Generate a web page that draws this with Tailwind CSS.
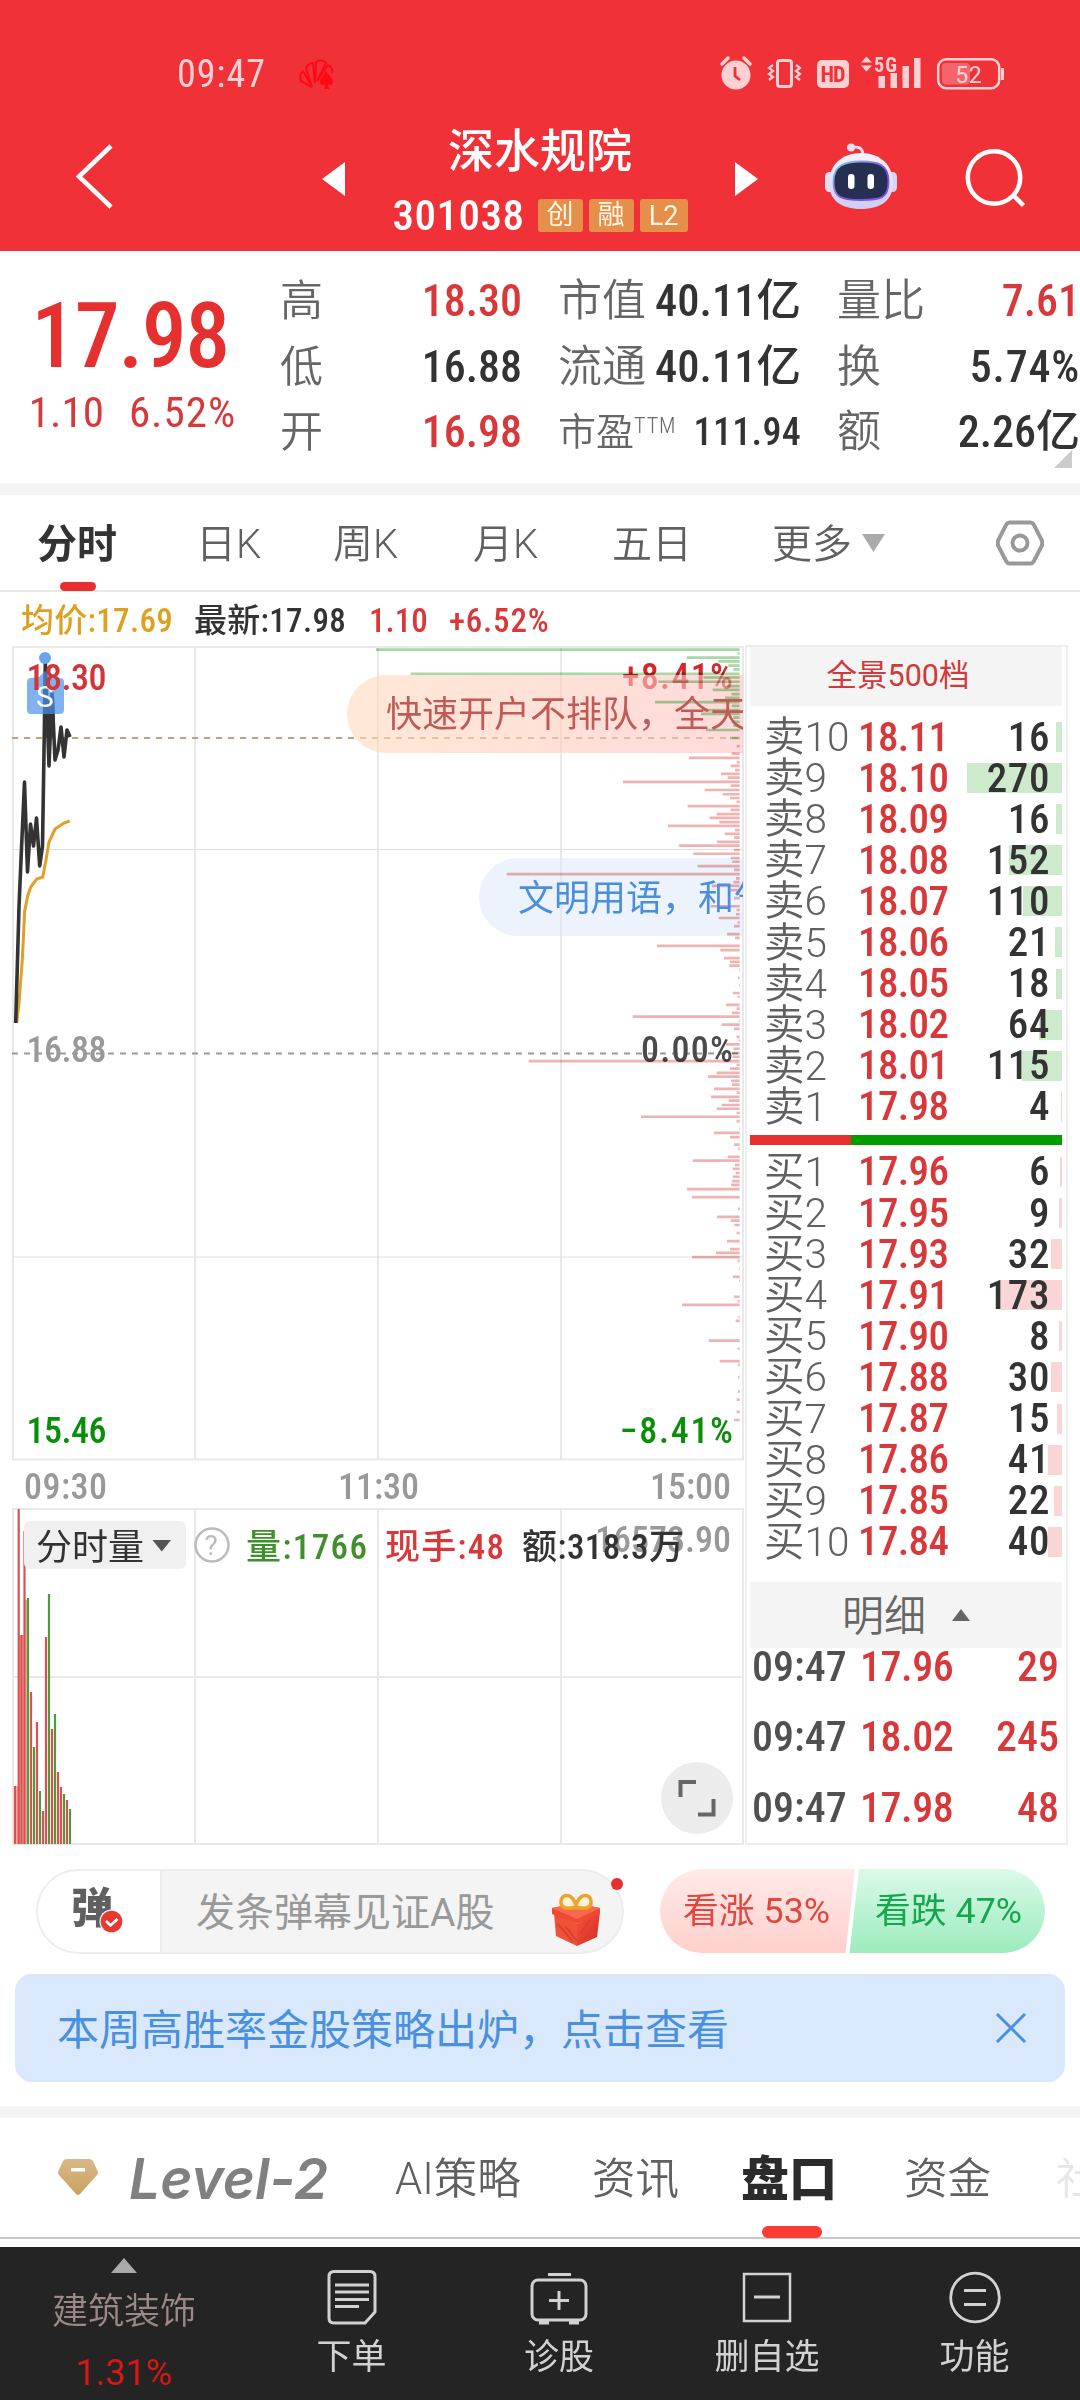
<!DOCTYPE html>
<html lang="zh-CN">
<head>
    <meta charset="UTF-8" />
    <meta name="viewport" content="width=device-width, initial-scale=1.0"/>
    <title>深水规院 301038</title>
    <script src="https://cdn.jsdelivr.net/npm/@tailwindcss/browser@4"></script>
    <style>
        body {
            font-family: 'Roboto', 'Noto Sans CJK SC', sans-serif;
        }
        .num {
            font-family: 'Roboto Condensed', 'Noto Sans CJK SC', sans-serif;
            font-weight: 500;
        }
    </style>
</head>
<body class="w-[1080px] h-[2400px] overflow-hidden bg-white text-[#333] flex flex-col">

    <!-- Header -->
    <header class="h-[251px] shrink-0 bg-[#f13138] text-white">
        <div class="h-[104px] pt-[43px] pl-[177px] pr-[74px] flex items-center text-[#ffd0d2]">
            <span class="num !font-normal text-[38px] tracking-[1px] leading-[60px]">09:47</span>
            <svg class="ml-[32px] shrink-0" width="38" height="30" viewBox="0 0 38 30" fill="none" stroke="#ff0a14" stroke-width="2">
                <path d="M14 28L3 22C1 17 3 13 5 12L14 28L8 9C10 5 13 4 15 4L17 24L18 3C22 0 27 2 28 4L19 22L30 6C34 8 35 12 34 14"/>
                <path d="M28 12c-3 5-7 8-6 12 2 3 4 2 5 1l-1 5h5l-1-5c2 1 4 1 5-1 1-4-4-7-7-12z" fill="#ff0a14" stroke="none"/>
            </svg>
            <svg class="ml-auto shrink-0" width="288" height="40" viewBox="718 53 288 40" fill="#ffd0d2">
                <!-- alarm -->
                <circle cx="736" cy="74" r="14.5"/>
                <path d="M722 63l6-6M750 63l-6-6" stroke="#ffd0d2" stroke-width="3.5" stroke-linecap="round"/>
                <path d="M735 66v9l5 4" stroke="#f13138" stroke-width="2.8" fill="none"/>
                <!-- vibrate -->
                <rect x="777.5" y="59.500" width="14" height="26" rx="2.500" fill="none" stroke="#ffd0d2" stroke-width="3"/>
                <path d="M773 64l-4 3 4 3-4 3 4 3-4 3M796 64l4 3-4 3 4 3-4 3 4 3" fill="none" stroke="#ffd0d2" stroke-width="2.200"/>
                <!-- HD -->
                <rect x="817" y="59" width="32" height="28" rx="5"/>
                <text x="820.500" y="81" font-family="Roboto Condensed" font-weight="700" font-size="22" fill="#f13138" textLength="25">HD</text>
                <!-- signal -->
                <path d="M861 61.500l5.500-6 5.500 6zM861 64.500l5.500 6 5.500-6z"/>
                <text x="874" y="70.500" font-family="Roboto Condensed" font-weight="700" font-size="20" textLength="23">5G</text>
                <path d="M878.500 75h6.500v12h-6.500zM890.500 72h6.500v15h-6.500zM902.500 65h6.500v22h-6.500zM914 57h6.500v30h-6.500z"/>
                <!-- battery -->
                <rect x="938.200" y="58.200" width="61" height="29" rx="8" fill="none" stroke="#ffd0d2" stroke-width="2.500"/>
                <rect x="942" y="62" width="28" height="21.500" rx="4" fill="#ffffff" fill-opacity=".25"/>
                <path d="M1001 67h3v12h-3z"/>
                <text x="955" y="82" font-family="Roboto Condensed" font-size="24" textLength="27" lengthAdjust="spacingAndGlyphs">52</text>
            </svg>
        </div>
        <div class="h-[147px] pl-[74px] pr-[53px] flex items-start">
            <svg class="mt-[39px] shrink-0" width="42" height="68" viewBox="0 0 42 68" fill="none" stroke="#fff" stroke-width="4.500"><path d="M37 3L5 33.500L37 64"/></svg>
            <svg class="ml-[206px] mt-[58px] shrink-0" width="23" height="34" viewBox="0 0 23 34"><path d="M23 0v34L0 17z" fill="#fff"/></svg>
            <div class="w-[390px] flex flex-col items-center">
                <h1 class="text-[46px] leading-[60px] font-medium mt-[17px]">深水规院</h1>
                <div class="flex items-center gap-[6px] mt-[8px] h-[52px]">
                    <span class="num text-[43px] leading-[52px] tracking-[.5px] mr-[7px]">301038</span>
                    <span class="w-[45px] h-[33px] rounded-[3px] bg-[#e58f4b] text-[27px] leading-[32px] text-center text-[#fff6e4]">创</span>
                    <span class="w-[45px] h-[33px] rounded-[3px] bg-[#e58f4b] text-[27px] leading-[32px] text-center text-[#fff6e4]">融</span>
                    <span class="w-[48px] h-[33px] rounded-[3px] bg-[#e58f4b] text-[27px] leading-[34px] text-center text-[#fff6e4]">L2</span>
                </div>
            </div>
            <svg class="mt-[58px] shrink-0" width="23" height="34" viewBox="0 0 23 34"><path d="M0 0v34L23 17z" fill="#fff"/></svg>
            <svg class="ml-[66px] mt-[39px] shrink-0" width="74" height="68" viewBox="0 0 74 68">
                <defs>
                    <linearGradient id="shell" x1="0" y1="0" x2="0" y2="1"><stop offset="0" stop-color="#fbf4fb"/><stop offset="1" stop-color="#cfcbf5"/></linearGradient>
                    <linearGradient id="rim" x1="0" y1="0" x2="1" y2="1"><stop offset="0" stop-color="#8fd0ee"/><stop offset=".6" stop-color="#7a4fe0"/><stop offset="1" stop-color="#7d5cf0"/></linearGradient>
                </defs>
                <path d="M28 4.500c7-1 11 0 11 9" fill="none" stroke="#f3dff0" stroke-width="2.800"/>
                <circle cx="27" cy="4.500" r="4" fill="#f3d9ee"/>
                <rect x="1" y="29" width="9" height="20" rx="4.500" fill="#e2def5"/>
                <rect x="64" y="29" width="9" height="20" rx="4.500" fill="#d9d4f3"/>
                <path d="M37 10C56 10 69 22 69 40 69 57 57 66 37 66S5 57 5 40C5 22 18 10 37 10z" fill="url(#shell)"/>
                <path d="M37 18.500c17 0 27.500 3 27.500 20S57 57 37 57 9.500 54.500 9.500 38.500 20 18.500 37 18.500z" fill="#252f52" stroke="url(#rim)" stroke-width="1.800"/>
                <rect x="24" y="31" width="6.500" height="15" rx="3.250" fill="#fff"/>
                <rect x="43.500" y="31" width="6.500" height="15" rx="3.250" fill="#fff"/>
            </svg>
            <svg class="ml-auto mt-[43px] shrink-0" width="64" height="64" viewBox="0 0 64 64" fill="none" stroke="#fff" stroke-width="4.500"><circle cx="31" cy="30.500" r="26.200"/><path d="M50 48l10.500 10.500"/></svg>
        </div>
    </header>

    <!-- Quote summary -->
    <section class="h-[232px] shrink-0 flex relative">
        <div class="w-[260px] text-center text-[#e5302f]">
            <div class="num text-[90px] leading-[100px] mt-[36px] tracking-[-1.5px]">17.98</div>
            <div class="num !font-[450] text-[43px] leading-[50px] flex justify-center gap-[25px] text-[#d8383a] pl-[5px]"><span>1.10</span><span class="tracking-[1px]">6.52%</span></div>
        </div>
        <div class="num ml-[20px] w-[242px] mt-[18px] text-[45px] leading-[65.5px]">
            <div class="flex justify-between"><span class="text-[43px] font-[350] text-[#666]">高</span><span class="text-[44px] text-[#d8383a]">18.30</span></div>
            <div class="flex justify-between"><span class="text-[43px] font-[350] text-[#666]">低</span><span class="text-[44px]">16.88</span></div>
            <div class="flex justify-between"><span class="text-[43px] font-[350] text-[#666]">开</span><span class="text-[44px] text-[#d8383a]">16.98</span></div>
        </div>
        <div class="num ml-[36px] w-[243px] mt-[18px] text-[45px] leading-[65.5px]">
            <div class="flex justify-between"><span class="text-[44px] font-[350] text-[#666]">市值</span><span class="text-[44.5px]">40.11亿</span></div>
            <div class="flex justify-between"><span class="text-[44px] font-[350] text-[#666]">流通</span><span class="text-[44.5px]">40.11亿</span></div>
            <div class="flex justify-between"><span class="text-[38px] font-[350] text-[#666]">市盈<sup class="text-[22px] top-[-12px] tracking-[1px]">TTM</sup></span><span class="text-[38px] tracking-[.3px]">111.94</span></div>
        </div>
        <div class="num ml-[36px] w-[243px] mt-[18px] text-[45px] leading-[65.5px]">
            <div class="flex justify-between"><span class="text-[44px] font-[350] text-[#666]">量比</span><span class="text-[#d8383a] text-[44px]">7.61</span></div>
            <div class="flex justify-between"><span class="text-[44px] font-[350] text-[#666]">换</span><span class="text-[44px] tracking-[.8px]">5.74%</span></div>
            <div class="flex justify-between"><span class="text-[44px] font-[350] text-[#666]">额</span><span class="text-[44px]">2.26亿</span></div>
        </div>
        <svg class="absolute right-[8px] bottom-[15px]" width="18" height="18" viewBox="0 0 18 18"><path d="M18 0v18H0z" fill="#ccc"/></svg>
    </section>
    <div class="h-[12px] shrink-0 bg-[#f4f4f4]"></div>

    <!-- Period tabs -->
    <nav class="h-[97px] shrink-0 border-b-2 border-[#e8e8e8] flex items-center text-[40px] leading-[60px] font-[350] text-[#606060] pl-[37px] pr-[36px] relative">
        <span class="w-[159px] font-bold text-[#333] pt-[4px]">分时</span>
        <span class="w-[137px] pt-[4px]">日K</span>
        <span class="w-[140px] pt-[4px]">周K</span>
        <span class="w-[139px] pt-[4px]">月K</span>
        <span class="w-[160px] pt-[4px]">五日</span>
        <span class="flex items-center gap-[10px] pt-[4px]">更多<svg class="mb-[4px]" width="23" height="18" viewBox="0 0 23 18"><path d="M0 0h23L11.500 18z" fill="#aaa"/></svg></span>
        <svg class="ml-auto" width="48" height="46" viewBox="0 0 48 46" fill="none" stroke="#999" stroke-width="4"><path d="M13.500 2.500h21q2 0 3 1.700l8 15.500q1.500 3.300 0 6.600l-8 15.500q-1 1.700-3 1.700h-21q-2 0-3-1.700l-8-15.500q-1.500-3.300 0-6.600l8-15.500q1-1.700 3-1.700z"/><circle cx="24" cy="23" r="7.500"/></svg>
        <i class="absolute left-[60px] bottom-[-1px] w-[36px] h-[9px] rounded-full bg-[#e5302f]"></i>
    </nav>

    <div class="h-[53px] shrink-0 pl-[21px] pt-[5px] flex items-center num text-[33px] leading-[48px]">
        <span class="text-[#dfa01f] w-[173px] tracking-[.3px]">均价:17.69</span>
        <span class="w-[175px] tracking-[.3px]">最新:17.98</span>
        <span class="text-[#d8383a] w-[80px]">1.10</span>
        <span class="text-[#d8383a] tracking-[.8px]">+6.52%</span>
    </div>

    <main class="h-[1200px] shrink-0 flex">
        <!-- Minute chart and volume -->
        <svg class="shrink-0 num" width="745" height="1200" viewBox="0 645 745 1200" font-size="36">
            <defs>
                <linearGradient id="pill" x1="0" y1="0" x2="1" y2="0"><stop offset="0" stop-color="#ffd9ba"/><stop offset="1" stop-color="#ffb0c6"/></linearGradient>
                <clipPath id="plot"><path d="M0 645h743v1200H0z"/></clipPath>
            </defs>
            <g fill="none" stroke="#e9e9e9" stroke-width="2">
                <path d="M13 647H743V1459.500H13zM195 647V1459M378 647V1459M561 647V1459"/>
                <path d="M13 1509H743V1844H13zM195 1509V1844M378 1509V1844M561 1509V1844M13 1677H743"/>
                <path d="M13 849.500H743M13 1257H743" stroke="#e0e0e0" stroke-width="1.200"/>
            </g>
            <path d="M12 738H739" stroke="#b9a680" stroke-width="2" stroke-dasharray="6 6"/>
            <path d="M12 1053.500H739" stroke="#999" stroke-width="2" stroke-dasharray="6 6"/>

            <path d="M16.700 1023L19 1003L22.300 960L24.700 911L27.700 896L30.700 887L36.700 879L42.700 877L46 860L49 842L55 829L64 823L69.700 821" fill="none" stroke="#dfa127" stroke-width="3"/>
            <path d="M15.700 1023L19 907L21.300 853L24.500 782L27.500 872L30.500 824L33.500 846L36.500 818L39.700 866L42.500 846L44.500 720L45.300 662L49 766L52 693L55 760L58 750L61 727L64 757L67 730L70 737" fill="none" stroke="#333" stroke-width="3.600" stroke-linejoin="round"/>
            <path d="M43.500 700h11v37h-11z" fill="#333"/>

            <!-- sell mark -->
            <circle cx="45" cy="658" r="6" fill="#6aa5ec"/>
            <path d="M31 678l8-1 6-6 6 6 9 1q4 0 4 4v28q0 4-4 4H31q-4 0-4-4v-28q0-4 4-4z" fill="#4a91ea" fill-opacity=".7"/>
            <text x="36" y="707" font-family="Roboto" font-weight="400" font-size="30" fill="#fff">S</text>

            <g>
                <text x="26.500" y="689.500" fill="#d03638" textLength="80">18.30</text>
                <text x="26.500" y="1062" fill="#999" textLength="80">16.88</text>
                <text x="26.500" y="1443" fill="#0a8f0a" textLength="80">15.46</text>
                <text x="622" y="689" fill="#d8262a" textLength="111">+8.41%</text>
                <text x="641" y="1062" fill="#4a4a4a" textLength="92">0.00%</text>
                <text x="620" y="1443" fill="#0a8f0a" textLength="113">−8.41%</text>
                <g fill="#999">
                    <text x="24" y="1498.500" textLength="83">09:30</text>
                    <text x="338" y="1498.500" textLength="81">11:30</text>
                    <text x="650" y="1498.500" textLength="81">15:00</text>
                    <text x="595" y="1552" textLength="136">16573.90</text>
                </g>
            </g>

            <g clip-path="url(#plot)">
                <rect x="347" y="675" width="700" height="78" rx="39" fill="url(#pill)" fill-opacity=".6"/>
                <rect x="479" y="858" width="500" height="78" rx="39" fill="#dce9fb" fill-opacity=".55"/>
            </g>
            <g class="mix-blend-multiply" transform="translate(340 640) scale(.33333 .5357)" fill="none" stroke-width="5">
                <path id="sellDepth" stroke="#a6d9a6"/>
                <path id="buyDepth" stroke="#f0b2b2"/>
            </g>
            <g clip-path="url(#plot)" font-family="Noto Sans CJK SC" font-weight="400">
                <text x="386" y="727" fill="#bf5a57">快速开户不排队，全天</text>
                <text x="518" y="911" fill="#4a8edc">文明用语，和气</text>
            </g>

            <!-- volume -->
            <g fill="none" stroke-width="2.200">
                <path stroke="#f7aaaa" stroke-width="3" d="M16.500 1844V1786M20.500 1844V1635M23.500 1844V1635M26.500 1844V1600"/>
                <path id="volUp" stroke="#d95252"/>
                <path id="volDown" stroke="#4f9a3c"/>
            </g>
            <rect x="24" y="1521" width="162" height="48" rx="6" fill="#f0f0f0"/>
            <g font-weight="400">
                <text x="36" y="1559.500" textLength="108" fill="#333">分时量</text>
                <path d="M152.500 1540h18.500l-9.250 11.500z" fill="#555"/>
                <circle cx="212" cy="1545" r="16.500" fill="none" stroke="#bbb" stroke-width="2.500"/>
                <text x="204.500" y="1555" font-family="Roboto" font-size="28" fill="#bbb">?</text>
            </g>
            <g font-size="35">
                <text x="246" y="1558.500" fill="#3f8f2a" textLength="121">量:1766</text>
                <text x="385" y="1558.500" fill="#d8383a" textLength="119">现手:48</text>
                <text x="522" y="1558.500" fill="#333" textLength="162">额:318.3万</text>
            </g>
            <circle cx="697" cy="1798" r="36" fill="#ececec"/>
            <path d="M680.500 1797V1782H696M698 1814.500H713.500V1799" fill="none" stroke="#666" stroke-width="4"/>
        </svg>

        <!-- Order book -->
        <aside class="w-[323px] shrink-0 border-2 border-[#eee] pl-[3px] pr-[4px] flex flex-col">
            <div class="h-[59px] shrink-0 bg-[#f4f4f4] text-center pr-[16px] text-[30.5px] leading-[58px] text-[#d03a3a]">全景500档</div>
            <div id="asks" class="mt-[10px]"></div>
            <div class="h-[10px] shrink-0 mt-[8px] flex"><i class="w-[101px] bg-[#e6312f]"></i><i class="grow bg-[#009c00]"></i></div>
            <div id="bids" class="mt-[6px]"></div>
            <div class="h-[66px] shrink-0 mt-[20px] pt-[4px] bg-[#f4f4f4] flex items-center justify-center gap-[26px] text-[42px] leading-[60px] text-[#666] font-[350]">明细<svg class="mb-[4px]" width="18" height="12" viewBox="0 0 18 12"><path d="M0 12h18L9 0z" fill="#666"/></svg></div>
            <div id="ticks" class="mt-[-17px]"></div>
        </aside>
    </main>

    <!-- Comment bar and vote -->
    <section class="h-[129px] shrink-0 pl-[36px] pt-[24px] flex">
        <div class="w-[588px] h-[85px] rounded-full border-2 border-[#ededed] bg-[#f4f4f4] flex items-center relative">
            <div class="w-[124px] h-full rounded-l-full bg-white border-r-2 border-[#ededed] relative">
                <span class="absolute left-[33px] top-[8px] text-[42px] leading-[60px] font-black text-[#606060]">弹</span>
                <svg class="absolute left-[61px] top-[38px]" width="25" height="25" viewBox="0 0 25 25"><circle cx="12.500" cy="12.500" r="12" fill="#fff"/><circle cx="12.500" cy="12.500" r="10.800" fill="#e8382f"/><path d="M7 12l4.500 4.500 7-6.500" fill="none" stroke="#fff" stroke-width="2.600"/></svg>
            </div>
            <span class="ml-[34px] pt-[3px] text-[39px] text-[#999]">发条弹幕见证A股</span>
            <svg class="absolute left-[512px] top-[22px]" width="52" height="54" viewBox="0 0 52 54">
                <defs><linearGradient id="box" x1="0" y1="0" x2="1" y2="1"><stop offset="0" stop-color="#f8553a"/><stop offset="1" stop-color="#d8262c"/></linearGradient></defs>
                <path d="M4 20l23 11v22L6 43z" fill="#ef5238"/>
                <path d="M27 31l23-12-3 25-20 9z" fill="url(#box)"/>
                <path d="M8 31l15 18M15 33l12 15M33 49l13-21M30 41l10-14" stroke="#d9402f" stroke-width="2"/>
                <path d="M2 15l24-5 24 5v6L27 31 2 21z" fill="#ee4a33"/>
                <path d="M2 15l24-5 24 5-23 11z" fill="#f8694b"/>
                <path d="M26 14C16 17 10 14 11 8 12 0 22 0 26 12 30 0 40 0 41 8c1 6-5 9-15 6z" fill="#fff2dd" stroke="#eda528" stroke-width="3.500"/>
            </svg>
            <i class="absolute right-[-1px] top-[7px] w-[12px] h-[12px] rounded-full bg-[#e5302f]"></i>
        </div>
        <svg class="ml-[36px]" width="386" height="84" viewBox="0 0 386 84" font-size="35">
            <defs>
                <linearGradient id="up" x1="0" y1="0" x2="0" y2="1"><stop offset="0" stop-color="#ffeae8"/><stop offset="1" stop-color="#ffd0cc"/></linearGradient>
                <linearGradient id="down" x1="0" y1="0" x2="0" y2="1"><stop offset="0" stop-color="#dbfae8"/><stop offset="1" stop-color="#9cebbe"/></linearGradient>
            </defs>
            <path d="M42 0H195L185.500 84H42A42 42 0 0 1 42 0z" fill="url(#up)"/>
            <path d="M199 0H343A42 42 0 0 1 343 84H189.500z" fill="url(#down)"/>
            <text x="23" y="54" fill="#e0483f" textLength="147" lengthAdjust="spacingAndGlyphs">看涨 53%</text>
            <text x="215" y="54" fill="#16a74e" textLength="147" lengthAdjust="spacingAndGlyphs">看跌 47%</text>
        </svg>
    </section>

    <!-- Notice -->
    <section class="h-[108px] shrink-0 mx-[15px] rounded-[17px] bg-[#dae8fb] pl-[42px] pr-[38px] flex items-center justify-between text-[42px] text-[#4a90e0]">
        <span class="pt-[4px]">本周高胜率金股策略出炉，点击查看</span>
        <svg width="32" height="32" viewBox="0 0 32 32" fill="none" stroke="#4a90e0" stroke-width="3"><path d="M2 2l28 28M30 2L2 30"/></svg>
    </section>
    <div class="h-[12px] shrink-0 mt-[24px] bg-[#f4f4f4]"></div>

    <!-- Content tabs -->
    <nav class="h-[121px] shrink-0 border-b-2 border-[#c8c8c8] flex items-center text-[43.5px] leading-[70px] font-[350] text-[#606060] pl-[58px] relative">
        <svg class="shrink-0" width="40" height="37" viewBox="0 0 40 37"><defs><linearGradient id="gem" x1="0" y1="0" x2="0" y2="1"><stop offset="0" stop-color="#d8b889"/><stop offset="1" stop-color="#cba15f"/></linearGradient></defs><path d="M9 0h22q3 0 4 2l5 11q0 2-1 3L22 35q-2 2-4 0L1 16q-1-1-1-3L5 2q1-2 4-2z" fill="url(#gem)"/><rect x="13" y="9" width="14" height="3.500" fill="#fff"/></svg>
        <svg class="ml-[28px] shrink-0" width="210" height="70" viewBox="0 0 210 70"><text x="3" y="56" font-family="Inter" font-weight="600" font-style="italic" font-size="57" fill="#808080" textLength="199" lengthAdjust="spacingAndGlyphs">Level-2</text></svg>
        <span class="w-[197px] shrink-0 ml-[59px] pt-[4px]">AI策略</span>
        <span class="w-[149px] shrink-0 pt-[4px]">资讯</span>
        <span class="w-[163px] shrink-0 pt-[4px] font-black text-[48px] text-[#2b2b2b]">盘口</span>
        <span class="w-[152px] shrink-0 pt-[4px]">资金</span>
        <span class="shrink-0 pt-[4px] text-[#e6e6e6]">社</span>
        <i class="absolute left-[762px] bottom-[-1px] w-[60px] h-[12px] rounded-full bg-[#fa3c32]"></i>
    </nav>
    <div class="h-[8px] shrink-0"></div>

    <!-- Bottom bar -->
    <footer class="h-[153px] shrink-0 bg-[#242424] text-[#d2d2d2] text-[35px] leading-[50px] flex">
        <div class="w-[248px] flex flex-col items-center">
            <svg class="mt-[11px]" width="26" height="15" viewBox="0 0 26 15"><path d="M0 15h26L13 0z" fill="#aaa"/></svg>
            <span class="text-[36px] mt-[14px] text-[#9c8886] font-[350]">建筑装饰</span>
            <span class="text-[36px] mt-[11px] text-[#d81812]">1.31%</span>
        </div>
        <div class="w-[207px] flex flex-col items-center">
            <svg class="mt-[22px]" width="52" height="56" viewBox="0 0 52 56" fill="none" stroke="#d2d2d2" stroke-width="3"><path d="M8 2.500h36q5 0 5 5V43L39 54H8q-5 0-5-5V7.500q0-5 5-5z"/><path d="M9 16h34M9 23h34M9 30.500h34M9 37.500h24"/></svg>
            <span class="mt-[8px]">下单</span>
        </div>
        <div class="w-[208px] flex flex-col items-center">
            <svg class="mt-[22px]" width="60" height="56" viewBox="0 0 60 56" fill="none" stroke="#d2d2d2" stroke-width="3"><path d="M19 5.500h23"/><rect x="3" y="11" width="54" height="40" rx="6"/><path d="M30 22v19M20 31.500h20"/><path d="M10 53.500h10M40 53.500h10" stroke-width="4"/></svg>
            <span class="mt-[8px]">诊股</span>
        </div>
        <div class="w-[208px] flex flex-col items-center">
            <svg class="mt-[22px]" width="52" height="56" viewBox="0 0 52 56" fill="none" stroke="#d2d2d2" stroke-width="2.500"><rect x="3" y="5" width="46" height="47"/><path d="M13 28h26" stroke-width="3"/></svg>
            <span class="mt-[8px]">删自选</span>
        </div>
        <div class="w-[207px] flex flex-col items-center">
            <svg class="mt-[22px]" width="52" height="56" viewBox="0 0 52 56" fill="none" stroke="#d2d2d2" stroke-width="2.800"><circle cx="26" cy="28.500" r="24.300"/><path d="M15 21.500h22M15 35.500h22" stroke-width="3"/></svg>
            <span class="mt-[8px]">功能</span>
        </div>
    </footer>

    <script>
        const asks = [['卖10', '18.11', 16], ['卖9', '18.10', 270], ['卖8', '18.09', 16], ['卖7', '18.08', 152], ['卖6', '18.07', 110],
            ['卖5', '18.06', 21], ['卖4', '18.05', 18], ['卖3', '18.02', 64], ['卖2', '18.01', 115], ['卖1', '17.98', 4]];
        const bids = [['买1', '17.96', 6], ['买2', '17.95', 9], ['买3', '17.93', 32], ['买4', '17.91', 173], ['买5', '17.90', 8],
            ['买6', '17.88', 30], ['买7', '17.87', 15], ['买8', '17.86', 41], ['买9', '17.85', 22], ['买10', '17.84', 40]];
        const ticks = [['09:47', '17.96', 29], ['09:47', '18.02', 245], ['09:47', '17.98', 48]];

        function bookRow(row, barClass) {
            return `<div class="h-[41.1px] relative flex items-center pl-[14px] text-[41px] leading-[41px]">
                <i class="absolute right-0 top-[6px] h-[30px] ${barClass}" style="width:${Math.max(1, row[2] * 0.352)}px"></i>
                <span class="w-[94px] text-[40.5px] font-[350] text-[#606060] whitespace-nowrap pt-[2px]">${row[0]}</span>
                <span class="num text-[#d8383a] tracking-[-.6px] pt-[1px]">${row[1]}</span>
                <span class="num ml-auto mr-[12px] tracking-[.6px] relative pt-[1px]">${row[2]}</span>
            </div>`;
        }

        document.getElementById('asks').innerHTML = asks.map(r => bookRow(r, 'bg-[#cdeacd]')).join('');
        document.getElementById('bids').innerHTML = bids.map(r => bookRow(r, 'bg-[#f9d5d5]')).join('');
        document.getElementById('ticks').innerHTML = ticks.map(r => `<div class="num h-[70.5px] flex items-center pl-[2px] pr-[3px] text-[42px] text-[#d8383a]">
            <span class="w-[108px] text-[#505050]">${r[0]}</span><span class="tracking-[-.5px]">${r[1]}</span><span class="ml-auto">${r[2]}</span></div>`).join('');

        // price distribution: [y, left edge], every bar ends at the right edge of the plot
        const sellDepth = [[18,108],[25,1193],[33,1040],[40,1135],[48,1165],[55,1180],[63,212],[70,1090],[78,955],[86,1160],[93,1118],[101,1175],[108,1155],[116,945],
            [123,1175],[131,1085],[138,1083],[145,1180],[153,1175],[160,1180],[168,1098],[183,1170]];
        const buyDepth = [[198,1190],[212,1175],[220,1047],[228,1190],[235,1172],[243,1185],[250,1143],[257,1163],[265,849],[272,1172],[280,1094],[288,1148],[295,1170],
            [302,1190],[310,1043],[317,1172],[325,1130],[332,1109],[340,1138],[347,984],[355,1185],[362,1154],[369,1182],[377,1131],[384,1017],[392,1182],[399,1060],
            [407,1172],[414,1177],[422,1073],[429,1182],[437,500],[445,1188],[452,1180],[459,1115],[467,1172],[474,1188],[482,1182],[497,1112],[504,1190],[512,1188],
            [519,1136],[527,1193],[534,1182],[549,1161],[556,1185],[571,951],[579,1141],[594,1152],[601,1170],[608,1168],[616,1197],[631,1194],[645,1197],[659,1179],
            [666,1193],[681,1158],[688,1190],[696,1176],[703,878],[711,1196],[718,1145],[726,1182],[741,1190],[748,1196],[755,1158],[763,1180],[771,1175],[778,1178],
            [786,566],[793,1190],[800,1170],[808,1130],[815,1104],[823,1173],[830,1176],[838,1122],[845,1190],[853,1113],[860,1166],[868,1145],[875,1130],[883,1190],
            [890,903],[898,1190],[912,1197],[920,1122],[928,1170],[942,1182],[950,1194],[965,1163],[972,1058],[980,1185],[987,1178],[995,1188],[1002,1178],[1010,1176],
            [1017,1173],[1025,1041],[1040,1056],[1062,1194],[1077,1131],[1084,1172],[1092,1183],[1107,1190],[1122,1161],[1137,1170],[1144,1128],[1152,1056],[1159,1193],
            [1174,1197],[1189,1179],[1196,1197],[1226,1182],[1234,1193],[1241,1026],[1264,1196],[1271,1187],[1308,1106],[1323,1193],[1346,1139],[1353,1194],[1376,1194],
            [1403,1194],[1418,1190],[1441,1190],[1456,1182]];
        const bars = list => list.map(([y, x]) => `M${x} ${y}H1199`).join('');
        document.getElementById('sellDepth').setAttribute('d', bars(sellDepth));
        document.getElementById('buyDepth').setAttribute('d', bars(buyDepth));

        // minute volume: [x, top]
        const volUp = [[15,1786],[18.7,1509],[21.5,1635],[24.5,1531],[31,1692],[37,1722],[43,1811],[46,1637],[52,1729],[58,1772],[61,1787],[67,1800]];
        const volDown = [[28,1598],[34,1747],[40,1791],[49,1594],[55,1714],[64,1794],[70,1809]];
        const cols = list => list.map(([x, y]) => `M${x} 1844V${y}`).join('');
        document.getElementById('volUp').setAttribute('d', cols(volUp));
        document.getElementById('volDown').setAttribute('d', cols(volDown));
    </script>
</body>
</html>
